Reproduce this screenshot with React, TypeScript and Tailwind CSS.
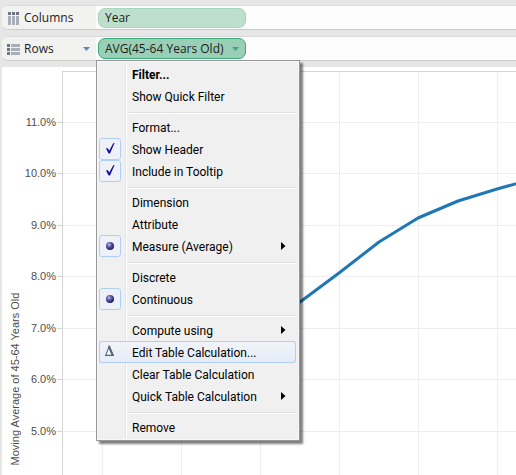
import type { ReactNode } from "react";

type Kind = "plain" | "checkbox" | "radio";

interface Entry {
  label: string;
  kind?: Kind;
  group?: string;
  checked?: boolean;
  submenu?: boolean;
  bold?: boolean;
  active?: boolean;
}

const sections: Entry[][] = [
  [{ label: "Filter...", bold: true }, { label: "Show Quick Filter" }],
  [
    { label: "Format..." },
    { label: "Show Header", kind: "checkbox", checked: true },
    { label: "Include in Tooltip", kind: "checkbox", checked: true },
  ],
  [
    { label: "Dimension", kind: "radio", group: "role" },
    { label: "Attribute", kind: "radio", group: "role" },
    { label: "Measure (Average)", kind: "radio", group: "role", checked: true, submenu: true },
  ],
  [
    { label: "Discrete", kind: "radio", group: "type" },
    { label: "Continuous", kind: "radio", group: "type", checked: true },
  ],
  [
    { label: "Compute using", submenu: true },
    { label: "Edit Table Calculation...", active: true },
    { label: "Clear Table Calculation" },
    { label: "Quick Table Calculation", submenu: true },
  ],
  [{ label: "Remove" }],
];

function Tick() {
  return (
    <svg className="pointer-events-none col-start-1 row-start-1 size-[22px]" viewBox="0 0 22 22" aria-hidden="true">
      <path d="M7 10.5 L8.6 10 L10.3 12.6 L14.2 5.2 L15.6 5 L11 15.6 L9.6 15.6 Z" fill="#12129b" />
    </svg>
  );
}

function Bullet() {
  return (
    <svg className="pointer-events-none col-start-1 row-start-1 size-[22px]" viewBox="0 0 22 22" aria-hidden="true">
      <defs>
        <radialGradient id="bullet" cx="0.38" cy="0.34" r="0.65">
          <stop offset="0" stopColor="#c9c9f2" />
          <stop offset="0.4" stopColor="#6262ad" />
          <stop offset="1" stopColor="#1c1c66" />
        </radialGradient>
      </defs>
      <circle cx="11" cy="11" r="4" fill="url(#bullet)" />
    </svg>
  );
}

function Delta() {
  return (
    <svg className="size-[22px]" viewBox="0 0 22 22" aria-hidden="true">
      <path d="M10 5.8 L6.7 14.4 H14.4 Z" fill="#fafbfd" stroke="#56667d" strokeWidth="1.1" />
      <path d="M9.6 4.6 H10.8 L15 15 H12.8 L9.4 6.8 Z" fill="#56667d" />
    </svg>
  );
}

function Arrow() {
  return (
    <svg className="mr-[10px] h-2 w-[5px]" viewBox="0 0 5 8" aria-hidden="true">
      <path d="M0 0 L4.5 4 L0 8 Z" fill="#000" />
    </svg>
  );
}

function MenuEntry({ entry }: { entry: Entry }) {
  const kind = entry.kind ?? "plain";
  const text = (
    <>
      <span className={entry.bold ? "flex-1 pt-[2px] text-left font-bold" : "flex-1 pt-[2px] text-left"}>
        {entry.label}
      </span>
      {entry.submenu && <Arrow />}
    </>
  );
  if (kind === "plain") {
    return (
      <button
        type="button"
        className={
          entry.active
            ? "flex h-[22px] w-full items-center gap-[11px] rounded-[3px] bg-linear-to-b from-[#f1f4f8] to-[#e5ecf7] ring-1 ring-[#aecff7] ring-inset"
            : "flex h-[22px] w-full items-center gap-[11px]"
        }
      >
        <span className="size-[22px]">{entry.active && <Delta />}</span>
        {text}
      </button>
    );
  }
  return (
    <label className="flex h-[22px] items-center gap-[11px]">
      <span className="grid size-[22px]">
        <input
          type={kind}
          name={entry.group ?? entry.label}
          defaultChecked={entry.checked}
          className="col-start-1 row-start-1 size-[22px] appearance-none rounded-[3px] checked:border checked:border-[#aecff7] checked:bg-[#eef2f8]"
        />
        {entry.checked && (kind === "checkbox" ? <Tick /> : <Bullet />)}
      </span>
      {text}
    </label>
  );
}

function ContextMenu() {
  return (
    <div className="absolute top-full left-0 z-10 w-51 border border-[#979797] bg-[#f0f0f0] pt-[2px] pr-[3px] pb-[2px] pl-[2px] font-[Roboto,'Noto_Sans',sans-serif] text-xs text-black shadow-[3px_3px_2px_rgba(0,0,0,0.5)] ring-1 ring-[#f7f7f7] ring-inset">
      <div className="bg-[linear-gradient(to_right,transparent_26px,#e2e3e3_26px,#e2e3e3_27px,#fff_27px,#fff_28px,transparent_28px)]">
        {sections.map((entries, i) => (
          <div key={entries[0].label}>
            {i > 0 && (
              <div className="h-[9px] pt-[5px] pl-7">
                <hr className="h-[2px] border-t border-b border-t-[#e0e0e0] border-b-white" />
              </div>
            )}
            {entries.map((entry) => (
              <MenuEntry key={entry.label} entry={entry} />
            ))}
          </div>
        ))}
      </div>
    </div>
  );
}

function ColumnsIcon() {
  return (
    <svg className="h-[14px] w-[13px]" viewBox="0 0 13 14" aria-hidden="true">
      {[0, 4, 8].map((x) => (
        <g key={x}>
          <rect x={x + 1} y="1" width="3" height="3" fill="#6c7683" />
          <rect x={x + 1} y="5" width="3" height="9" fill="#a9afb9" />
        </g>
      ))}
    </svg>
  );
}

function RowsIcon() {
  return (
    <svg className="h-[14px] w-[13px]" viewBox="0 0 13 14" aria-hidden="true">
      {[1, 5, 9].map((y) => (
        <g key={y}>
          <rect x="0" y={y + 1} width="3" height="3" fill="#6c7683" />
          <rect x="4" y={y + 1} width="9" height="3" fill="#a9afb9" />
        </g>
      ))}
    </svg>
  );
}

function Shelf({ icon, name, arrow, children }: { icon: ReactNode; name: string; arrow?: boolean; children: ReactNode }) {
  return (
    <section className="flex h-[25px] rounded-l-md border-t border-b border-t-[#dadada] border-b-[#c9ccc9] bg-[#fdfdfd]">
      <div className="flex w-[94px] items-center gap-1 rounded-l-md bg-[#f2f2f0] pl-[5px]">
        {icon}
        <h2 className="flex-1">{name}</h2>
        {arrow && (
          <button type="button" aria-label="Rows menu" className="mr-[6px]">
            <svg className="h-1 w-[7px]" viewBox="0 0 7 4" aria-hidden="true">
              <path d="M0 0 H7 L3.5 4 Z" fill="#5e87b5" />
            </svg>
          </button>
        )}
      </div>
      <div className="relative flex items-center px-[2px]">{children}</div>
    </section>
  );
}

const ticks = [
  { label: "11.0%", y: 51 },
  { label: "10.0%", y: 102 },
  { label: "9.0%", y: 154 },
  { label: "8.0%", y: 205 },
  { label: "7.0%", y: 257 },
  { label: "6.0%", y: 308 },
  { label: "5.0%", y: 360 },
];

function Chart() {
  return (
    <svg
      className="block h-101 w-full font-['Liberation_Sans',Arial,sans-serif] text-[11px]"
      role="img"
      aria-label="Moving Average of 45-64 Years Old"
    >
      {[100, 179, 258, 337, 416, 495].map((x) => (
        <rect key={x} x={x} y="1" width="1" height="403" fill="#eeeeee" />
      ))}
      {ticks.map((t) => (
        <g key={t.label}>
          <rect x="61" y={t.y} width="100%" height="1" fill="#eeeeee" />
          <rect x="55" y={t.y} width="5" height="1" fill="#d4d4d4" />
          <text x="54" y={t.y + 4} textAnchor="end" fill="#4e4e4e">
            {t.label}
          </text>
        </g>
      ))}
      <rect x="60" y="0" width="1" height="404" fill="#d4d4d4" />
      <rect x="60" y="0" width="100%" height="1" fill="#d4d4d4" />
      <text transform="translate(17 308) rotate(-90)" textAnchor="middle" fill="#4e4e4e">
        Moving Average of 45-64 Years Old
      </text>
      <polyline
        points="258,260 298,231 337,202 377,171 416,147 456,130 495,118 535,107"
        fill="none"
        stroke="#1f77b4"
        strokeWidth="3"
        strokeLinejoin="round"
      />
    </svg>
  );
}

export default function App() {
  return (
    <main className="overflow-hidden bg-[#e6e6e6] pt-[5px] pl-[2px] font-['Open_Sans','Noto_Sans',sans-serif] text-xs text-[#1c1c1c]">
      <div className="flex flex-col gap-[6px] pb-[6px]">
        <Shelf icon={<ColumnsIcon />} name="Columns">
          <button
            type="button"
            className="flex h-5 w-37 items-center rounded-[7px] border border-[#a9d5ba] bg-[#bedfcb] px-[6px]"
          >
            Year
          </button>
        </Shelf>
        <Shelf icon={<RowsIcon />} name="Rows" arrow>
          <button
            type="button"
            className="flex h-[21px] w-37 items-center justify-between rounded-[7px] border border-[#3cab7a] bg-[#99cfb6] px-[6px] whitespace-nowrap"
          >
            AVG(45-64 Years Old)
            <svg className="h-1 w-[7px]" viewBox="0 0 7 4" aria-hidden="true">
              <path d="M0 0 H7 L3.5 4 Z" fill="#3cab7a" />
            </svg>
          </button>
          <ContextMenu />
        </Shelf>
      </div>
      <div className="bg-white pt-1">
        <Chart />
      </div>
    </main>
  );
}
